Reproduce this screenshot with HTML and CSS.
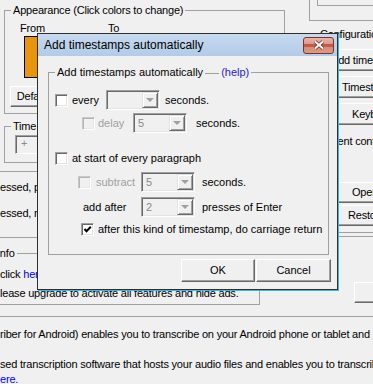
FILE: index.html
```html
<!DOCTYPE html>
<html lang="en">
<head>
  <meta charset="UTF-8" />
  <title>Add timestamps automatically</title>
  <link rel="stylesheet" href="styles.css">
</head>
<body>
  <div class="app">
    <div class="top">
      <div class="left">
        <fieldset class="group appearance">
          <legend>Appearance (Click colors to change)</legend>
          <div class="swatch-labels"><span class="from">From</span><span>To</span></div>
          <div class="swatch"></div>
          <button class="win-btn default">Default</button>
        </fieldset>
        <fieldset class="group time">
          <legend>Time</legend>
          <div class="field">+</div>
        </fieldset>
        <div class="keys">
          <p>essed, pauses</p>
          <p>essed, rewinds</p>
        </div>
      </div>
      <div class="right">
        <div class="corner"><div class="corner-inner"></div></div>
        <fieldset class="group config">
          <legend>Configuration</legend>
          <button class="win-btn cfg-btn cfg-add">Add timestamps</button>
          <button class="win-btn cfg-btn cfg-ts">Timestamps</button>
          <button class="win-btn cfg-btn cfg-keys">Keyboard</button>
          <p class="current">Current configuration</p>
          <button class="win-btn cfg-btn cfg-open short">Open</button>
          <button class="win-btn cfg-btn cfg-restore short">Restore</button>
        </fieldset>
        <div class="rule"></div>
      </div>
    </div>
    <div class="info-row">
      <fieldset class="group info">
        <legend>Info</legend>
        <p class="click">click <a href="#">here</a></p>
        <p class="upgrade">lease upgrade to activate all features and hide ads.</p>
      </fieldset>
      <button class="win-btn side-btn"></button>
    </div>
    <div class="about">
      <p>riber for Android) enables you to transcribe on your Android phone or tablet and</p>
      <p>sed transcription software that hosts your audio files and enables you to transcribe<br><a href="#">ere.</a></p>
    </div>
  </div>

  <div class="dialog">
    <div class="titlebar">
      <span>Add timestamps automatically</span>
      <span class="close">
        <svg width="12" height="10" viewBox="0 0 12 10">
          <path d="M2 1.5 L10 8.5 M10 1.5 L2 8.5" stroke="#6b3026" stroke-width="3.6" />
          <path d="M2 1.5 L10 8.5 M10 1.5 L2 8.5" stroke="#fff" stroke-width="2" />
        </svg>
      </span>
    </div>

    <fieldset class="auto">
      <legend>Add timestamps automatically<span class="legend-rule"></span><a class="help" href="#">(help)</a></legend>

      <div class="row r-every">
        <span class="cb"></span>
        <span class="lbl w-every">every</span>
        <span class="combo"><span class="val"></span><span class="drop"><i></i></span></span>
        <span class="after a-5">seconds.</span>
      </div>
      <div class="row r-delay">
        <span class="cb off"></span>
        <span class="lbl off-text w-delay">delay</span>
        <span class="combo"><span class="val">5</span><span class="drop"><i></i></span></span>
        <span class="after a-9">seconds.</span>
      </div>
      <div class="row r-para">
        <span class="cb"></span>
        <span class="lbl">at start of every paragraph</span>
      </div>
      <div class="row r-sub">
        <span class="cb off"></span>
        <span class="lbl off-text w-sub">subtract</span>
        <span class="combo"><span class="val">5</span><span class="drop"><i></i></span></span>
        <span class="after a-7">seconds.</span>
      </div>
      <div class="row r-add">
        <span class="lbl w-add">add after</span>
        <span class="combo"><span class="val">2</span><span class="drop"><i></i></span></span>
        <span class="after a-7">presses of Enter</span>
      </div>
      <div class="row r-cr">
        <span class="cb">
          <svg width="11" height="11" viewBox="0 0 11 11">
            <path d="M2.5 5 L4.5 7.2 L8.8 2.8" fill="none" stroke="#000" stroke-width="2" />
          </svg>
        </span>
        <span class="lbl">after this kind of timestamp, do carriage return</span>
      </div>
    </fieldset>

    <div class="actions">
      <button class="win-btn ok">OK</button>
      <button class="win-btn cancel">Cancel</button>
    </div>
  </div>
</body>
</html>
```

FILE: styles.css
```css
* {
  box-sizing: border-box;
}
body {
  margin: 0;
  width: 373px;
  height: 384px;
  overflow: hidden;
  position: relative;
  background: #f0f0f0;
  font-family: "Liberation Sans", Arial, sans-serif;
  font-size: 11px;
  line-height: 13px;
  color: #000;
}
p {
  margin: 0;
}
a {
  color: #0000ff;
  text-decoration: none;
}

/* classic 3d button */
.win-btn {
  display: block;
  padding: 0;
  font: inherit;
  letter-spacing: inherit;
  color: #000;
  background: #f0f0f0;
  border: 1px solid;
  border-color: #fff #696969 #696969 #fff;
  box-shadow: inset -1px -1px #a0a0a0;
}

/* background window */
.app {
  letter-spacing: -0.2px;
  white-space: nowrap;
}
.top {
  display: flex;
}
.left {
  width: 300px;
  flex: none;
}
.right {
  width: 200px;
  flex: none;
  margin-left: 9px;
}
.group {
  margin: 0;
  padding: 0 0 0 5px;
  border: 1px solid #a0a0a0;
  min-width: 0;
}
.group legend {
  padding: 0 2px;
  margin-left: 1px;
}
.appearance {
  margin: 4px 0 0 4px;
  width: 281px;
  padding-bottom: 6px;
}
.swatch-labels {
  display: flex;
  margin-top: 5px;
  padding-left: 10px;
}
.swatch-labels .from {
  width: 88px;
}
.swatch {
  width: 60px;
  height: 42px;
  margin: 1px 0 0 14px;
  background: #e8950c;
  border: 1px solid #000;
}
.default {
  margin-top: 8px;
  width: 47px;
  height: 21px;
}
.time {
  margin: 6px 0 0 4px;
  width: 150px;
  padding-bottom: 8px;
}
.field {
  margin: 2px 0 0 5px;
  width: 60px;
  height: 19px;
  padding-left: 5px;
  line-height: 15px;
  color: #8a8a8a;
  background: #f0f0f0;
  border: 1px solid;
  border-color: #a0a0a0 #fff #fff #a0a0a0;
  box-shadow: inset 1px 1px #696969;
}
.keys {
  margin-top: 8px;
  padding: 9px 0 17px;
  border-top: 1px solid #a0a0a0;
  border-bottom: 1px solid #a0a0a0;
}
.keys p + p {
  margin-top: 13px;
}

.corner {
  height: 21px;
  border-left: 1px solid #a0a0a0;
  border-bottom: 1px solid #a0a0a0;
}
.corner-inner {
  margin-left: 7px;
  height: 6px;
  border-left: 1px solid #a0a0a0;
  border-bottom: 1px solid #a0a0a0;
}
.config {
  margin: 7px 0 0 2px;
  width: 150px;
  padding-bottom: 6px;
}
.cfg-btn {
  width: 110px;
  height: 22px;
  margin-top: 5px;
  text-align: left;
}
.cfg-btn.short {
  height: 21px;
}
.cfg-add {
  margin-top: 8px;
  padding-left: 13px;
}
.cfg-ts {
  padding-left: 24px;
}
.cfg-keys {
  padding-left: 34px;
}
.current {
  margin-top: 10px;
}
.cfg-open {
  margin-top: 34px;
  padding-left: 34px;
}
.cfg-restore {
  margin-top: 2px;
  padding-left: 30px;
}
.rule {
  margin-top: 3px;
  border-top: 1px solid #a0a0a0;
}

.info-row {
  display: flex;
  align-items: flex-start;
}
.info {
  flex: none;
  margin: 9px 0 0 -12px;
  width: 272px;
  padding-bottom: 4px;
}
.info p {
  padding-left: 6px;
}
.info .click {
  margin-top: 8px;
}
.info .upgrade {
  margin-top: 6px;
}
.side-btn {
  flex: none;
  margin: 44px 0 0 94px;
  width: 60px;
  height: 21px;
}
.about {
  margin-top: 11px;
  padding-top: 10px;
  border-top: 1px solid #a0a0a0;
  line-height: 15px;
}
.about p + p {
  margin-top: 15px;
}

/* dialog */
.dialog {
  position: absolute;
  left: 37px;
  top: 33px;
  width: 301px;
  height: 257px;
  display: flex;
  flex-direction: column;
  background: #f0f0f0;
  border: 1px solid #2f2f2f;
  box-shadow: 1px 1px 0 #36b8ea;
}
.titlebar {
  height: 22px;
  display: flex;
  align-items: center;
  justify-content: space-between;
  padding: 0 3px 0 6px;
  font-size: 12px;
  background: linear-gradient(#c7daef, #b2cbe8);
}
.close {
  width: 31px;
  height: 17px;
  display: flex;
  align-items: center;
  justify-content: center;
  border: 1px solid #7a3428;
  border-radius: 3px;
  background: linear-gradient(#e9b6a9, #dc9785 42%, #c4553f 42%, #c85f49 62%, #d68b78 62%, #dc9a89);
}
.auto {
  margin: 10px 8px 0 10px;
  padding: 0 0 15px 6px;
  border: 1px solid #a0a0a0;
  min-width: 0;
}
.auto legend {
  padding: 0 2px;
}
.legend-rule {
  display: inline-block;
  width: 14px;
  margin: 0 2px;
  vertical-align: middle;
  border-top: 1px solid #a0a0a0;
}
.help {
  color: #2323d8;
}
.row {
  display: flex;
  align-items: center;
  height: 20px;
  white-space: nowrap;
}
.r-every {
  margin-top: 11px;
}
.r-delay {
  margin-top: 3px;
  padding-left: 27px;
}
.r-para {
  margin-top: 15px;
}
.r-sub {
  margin-top: 4px;
  padding-left: 23px;
}
.r-add {
  margin-top: 5px;
  padding-left: 28px;
}
.r-cr {
  margin-top: 2px;
  padding-left: 26px;
}
.cb {
  flex: none;
  width: 13px;
  height: 13px;
  background: #fff;
  border: 1px solid;
  border-color: #a0a0a0 #fff #fff #a0a0a0;
  box-shadow: inset 1px 1px #696969, inset -1px -1px #e3e3e3;
}
.cb svg {
  display: block;
}
.cb.off {
  background: #f0f0f0;
  border-color: #c8c8c8 #fff #fff #c8c8c8;
  box-shadow: inset 1px 1px #b4b4b4, inset -1px -1px #e8e8e8;
}
.lbl {
  margin-left: 4px;
}
.off-text {
  color: #a0a0a0;
}
.w-every {
  width: 34px;
}
.w-delay {
  margin-left: 3px;
  width: 35px;
}
.w-sub {
  margin-left: 5px;
  width: 45px;
}
.w-add {
  margin-left: 0;
  width: 58px;
}
.after.a-5 {
  margin-left: 5px;
}
.after.a-7 {
  margin-left: 7px;
}
.after.a-9 {
  margin-left: 9px;
}
.combo {
  flex: none;
  display: flex;
  width: 54px;
  height: 20px;
  padding: 1px;
  color: #8a8a8a;
  background: #f0f0f0;
  border: 1px solid;
  border-color: #a0a0a0 #fff #fff #a0a0a0;
  box-shadow: inset 1px 1px #696969, inset -1px -1px #e3e3e3;
}
.combo .val {
  flex: 1;
  padding-left: 3px;
  line-height: 16px;
}
.combo .drop {
  width: 16px;
  display: flex;
  align-items: center;
  justify-content: center;
  background: #f0f0f0;
  border: 1px solid;
  border-color: #e3e3e3 #696969 #696969 #e3e3e3;
  box-shadow: inset 1px 1px #fff, inset -1px -1px #a0a0a0;
}
.combo .drop i {
  width: 0;
  height: 0;
  border-left: 4px solid transparent;
  border-right: 4px solid transparent;
  border-top: 4px solid #a0a0a0;
}
.actions {
  display: flex;
  justify-content: flex-end;
  gap: 1px;
  margin: 4px 6px 0 0;
}
.ok {
  width: 74px;
  height: 23px;
}
.cancel {
  width: 75px;
  height: 23px;
}
```
